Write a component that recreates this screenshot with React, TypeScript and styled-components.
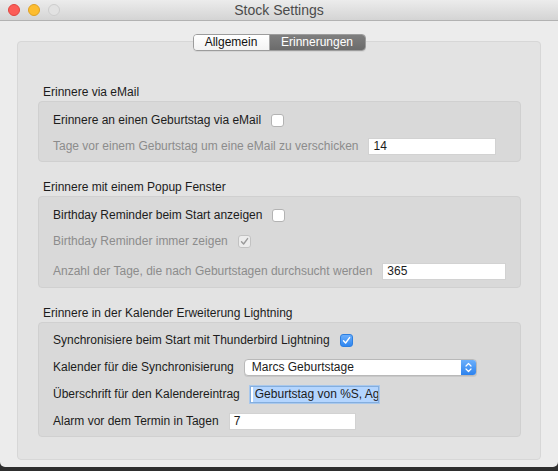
import React from 'react';
import styled, { createGlobalStyle, css } from 'styled-components';

const Global = createGlobalStyle`
  html, body { margin: 0; padding: 0; background: #2e2e2e; }
  body {
    font-family: "Liberation Sans", Arial, sans-serif;
    font-size: 12px;
    -webkit-font-smoothing: antialiased;
  }
`;

const Window = styled.div`
  width: 558px;
  height: 467px;
  background: #ececec;
  border-bottom-left-radius: 5px;
  border-bottom-right-radius: 5px;
  overflow: hidden;
  display: flex;
  flex-direction: column;
`;

const TitleBar = styled.div`
  height: 21px;
  box-sizing: border-box;
  border-bottom: 1px solid #b2b2b2;
  background: linear-gradient(#ececec, #d4d4d4);
  display: grid;
  grid-template-columns: 1fr auto 1fr;
  align-items: center;
`;

const Lights = styled.div`
  display: flex;
  gap: 8px;
  padding-left: 8px;
`;

const Light = styled.span<{ $fill: string; $ring: string }>`
  width: 12px;
  height: 12px;
  box-sizing: border-box;
  border-radius: 50%;
  background: ${(p) => p.$fill};
  border: 1px solid ${(p) => p.$ring};
`;

const Title = styled.div`
  font-size: 14px;
  color: #4b4b4b;
  line-height: 20px;
`;

const Content = styled.div`
  padding: 13px 17px 0 17px;
  display: flex;
  flex-direction: column;
  align-items: center;
`;

const Segments = styled.div`
  position: relative;
  z-index: 1;
  display: flex;
  height: 17px;
  box-sizing: border-box;
  border: 1px solid #9c9c9c;
  border-radius: 4px;
  overflow: hidden;
  box-shadow: 0 1px 0 rgba(0, 0, 0, 0.06);
`;

const Segment = styled.div<{ $active?: boolean }>`
  display: flex;
  align-items: center;
  justify-content: center;
  font-size: 12px;
  line-height: 15px;
  ${(p) =>
    p.$active
      ? css`
          width: 95px;
          color: #ffffff;
          background: linear-gradient(#7f7f7f, #6b6b6b);
        `
      : css`
          width: 75px;
          color: #111111;
          background: linear-gradient(#ffffff, #f3f3f3);
          border-right: 1px solid #a8a8a8;
        `}
`;

const TabBox = styled.div`
  align-self: stretch;
  margin-top: -10px;
  box-sizing: border-box;
  width: 524px;
  background: #e3e3e3;
  border: 1px solid #d7d7d7;
  border-radius: 4px;
  padding: 42px 19px 22px 20px;
  display: flex;
  flex-direction: column;
`;

const Heading = styled.div<{ $first?: boolean }>`
  margin: ${(p) => (p.$first ? '0' : '17px')} 0 1px 5px;
  line-height: 16px;
  color: #1c1c1c;
`;

const Group = styled.div<{ $pt: number; $pb: number }>`
  background: #d9d9d9;
  border: 1px solid #d0d0d0;
  border-radius: 4px;
  padding: ${(p) => p.$pt}px 14px ${(p) => p.$pb}px 14px;
  display: flex;
  flex-direction: column;
`;

const Row = styled.div<{ $mt?: number }>`
  height: 20px;
  display: flex;
  align-items: center;
  gap: 10px;
  margin-top: ${(p) => p.$mt ?? 0}px;
`;

const Label = styled.span<{ $dim?: boolean }>`
  color: ${(p) => (p.$dim ? '#8c8c8c' : '#1c1c1c')};
  white-space: nowrap;
  line-height: 16px;
`;

const Box = styled.span<{ $state: 'off' | 'dim' | 'on' }>`
  width: 13px;
  height: 13px;
  box-sizing: border-box;
  border-radius: 3px;
  display: inline-flex;
  align-items: center;
  justify-content: center;
  ${(p) =>
    p.$state === 'on'
      ? css`
          background: linear-gradient(#6aaefc, #2f86f0);
          border: 1px solid #2d7fe0;
        `
      : p.$state === 'dim'
      ? css`
          background: #ececec;
          border: 1px solid #c2c2c2;
        `
      : css`
          background: #ffffff;
          border: 1px solid #b3b3b3;
        `}
`;

const Field = styled.div<{ $w?: number; $focus?: boolean }>`
  width: ${(p) => p.$w ?? 128}px;
  height: 17px;
  box-sizing: border-box;
  background: #ffffff;
  border: 1px solid ${(p) => (p.$focus ? '#84aede' : '#d2d2d2')};
  ${(p) =>
    p.$focus &&
    css`
      box-shadow: 0 0 0 1px #a9c8ec;
    `}
  padding: 0 4px;
  display: flex;
  align-items: center;
  overflow: hidden;
  white-space: nowrap;
  color: #1c1c1c;
  line-height: 15px;
`;

const Selected = styled.span`
  background: #b4d5fe;
  margin-left: -2px;
  padding: 0 2px;
`;

const Select = styled.div`
  width: 233px;
  height: 17px;
  box-sizing: border-box;
  border: 1px solid #b9b9b9;
  border-radius: 4px;
  background: #ffffff;
  display: flex;
  align-items: stretch;
  overflow: hidden;
  box-shadow: 0 1px 0 rgba(0, 0, 0, 0.08);
`;

const SelectText = styled.span`
  flex: 1;
  padding-left: 7px;
  line-height: 15px;
  color: #1c1c1c;
  white-space: nowrap;
`;

const SelectArrows = styled.span`
  width: 15px;
  background: linear-gradient(#6db0fb, #2c82ee);
  display: flex;
  align-items: center;
  justify-content: center;
`;

const Check = ({ color }: { color: string }) => (
  <svg width="9" height="9" viewBox="0 0 9 9">
    <path d="M1.5 4.8 L3.6 7 L7.6 1.6" fill="none" stroke={color} strokeWidth="1.4" strokeLinecap="round" strokeLinejoin="round" />
  </svg>
);

const Arrows = () => (
  <svg width="7" height="11" viewBox="0 0 7 11">
    <path d="M1 4 L3.5 1.5 L6 4 M1 7 L3.5 9.5 L6 7" fill="none" stroke="#ffffff" strokeWidth="1.2" strokeLinecap="round" strokeLinejoin="round" />
  </svg>
);

export default function App() {
  return (
    <>
      <Global />
      <Window>
        <TitleBar>
          <Lights>
            <Light $fill="#fc5d57" $ring="#e04640" />
            <Light $fill="#fdbd2f" $ring="#dea123" />
            <Light $fill="#e2e2e2" $ring="#cdcdcd" />
          </Lights>
          <Title>Stock Settings</Title>
          <span />
        </TitleBar>
        <Content>
          <Segments>
            <Segment>Allgemein</Segment>
            <Segment $active>Erinnerungen</Segment>
          </Segments>
          <TabBox>
            <Heading $first>Erinnere via eMail</Heading>
            <Group $pt={8} $pb={5}>
              <Row>
                <Label>Erinnere an einen Geburtstag via eMail</Label>
                <Box $state="off" />
              </Row>
              <Row $mt={6}>
                <Label $dim>Tage vor einem Geburtstag um eine eMail zu verschicken</Label>
                <Field>14</Field>
              </Row>
            </Group>

            <Heading>Erinnere mit einem Popup Fenster</Heading>
            <Group $pt={8} $pb={6}>
              <Row>
                <Label>Birthday Reminder beim Start anzeigen</Label>
                <Box $state="off" />
              </Row>
              <Row $mt={6}>
                <Label $dim>Birthday Reminder immer zeigen</Label>
                <Box $state="dim">
                  <Check color="#9a9a9a" />
                </Box>
              </Row>
              <Row $mt={10}>
                <Label $dim>Anzahl der Tage, die nach Geburtstagen durchsucht werden</Label>
                <Field>365</Field>
              </Row>
            </Group>

            <Heading>Erinnere in der Kalender Erweiterung Lightning</Heading>
            <Group $pt={7} $pb={5}>
              <Row>
                <Label>Synchronisiere beim Start mit Thunderbird Lightning</Label>
                <Box $state="on">
                  <Check color="#ffffff" />
                </Box>
              </Row>
              <Row $mt={7}>
                <Label>Kalender für die Synchronisierung</Label>
                <Select>
                  <SelectText>Marcs Geburtstage</SelectText>
                  <SelectArrows>
                    <Arrows />
                  </SelectArrows>
                </Select>
              </Row>
              <Row $mt={7}>
                <Label>Überschrift für den Kalendereintrag</Label>
                <Field $w={129} $focus>
                  <Selected>Geburtstag von %S, Age</Selected>
                </Field>
              </Row>
              <Row $mt={7}>
                <Label>Alarm vor dem Termin in Tagen</Label>
                <Field $w={127}>7</Field>
              </Row>
            </Group>
          </TabBox>
        </Content>
      </Window>
    </>
  );
}
